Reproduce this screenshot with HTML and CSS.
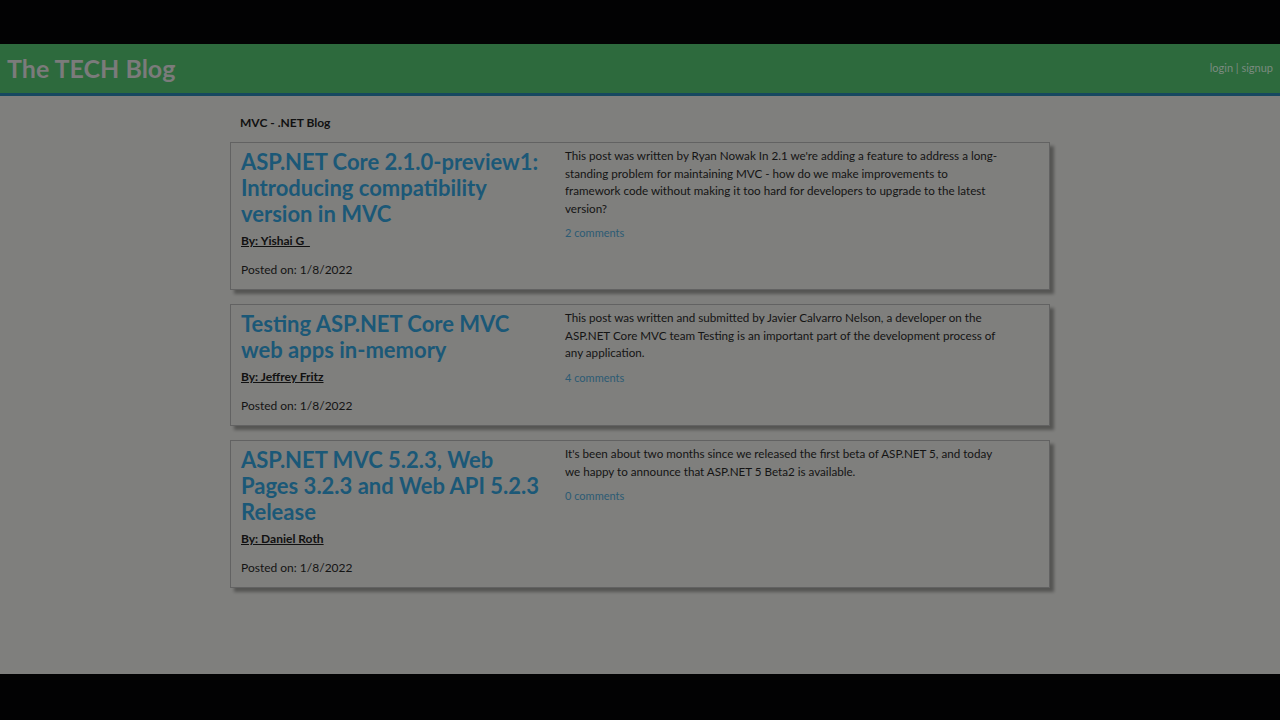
FILE: index.html
```html
<!DOCTYPE html>
<html lang="en">
<head>
<meta charset="utf-8">
<title>The TECH Blog</title>
<link rel="stylesheet" href="styles.css">
</head>
<body>
<div class="page">
  <header class="site-header">
    <a class="brand" href="#">The TECH Blog</a>
    <nav class="auth"><a href="#">login</a> | <a href="#">signup</a></nav>
  </header>
  <main class="main">
    <h2 class="blog-name">MVC - .NET Blog</h2>
    <article class="post">
      <div class="post-meta">
        <h3 class="post-title">ASP.NET Core 2.1.0-preview1: Introducing compatibility version in MVC</h3>
        <a class="post-author" href="#">By: Yishai G_</a>
        <p class="post-date">Posted on: 1/8/2022</p>
      </div>
      <div class="post-body">
        <p class="post-text">This post was written by Ryan Nowak In 2.1 we're adding a feature to address a long-standing problem for maintaining MVC - how do we make improvements to framework code without making it too hard for developers to upgrade to the latest version?</p>
        <a class="post-comments" href="#">2 comments</a>
      </div>
    </article>
    <article class="post">
      <div class="post-meta">
        <h3 class="post-title">Testing ASP.NET Core MVC web apps in-memory</h3>
        <a class="post-author" href="#">By: Jeffrey Fritz</a>
        <p class="post-date">Posted on: 1/8/2022</p>
      </div>
      <div class="post-body">
        <p class="post-text">This post was written and submitted by Javier Calvarro Nelson, a developer on the ASP.NET Core MVC team Testing is an important part of the development process of any application.</p>
        <a class="post-comments" href="#">4 comments</a>
      </div>
    </article>
    <article class="post">
      <div class="post-meta">
        <h3 class="post-title">ASP.NET MVC 5.2.3, Web Pages 3.2.3 and Web API 5.2.3 Release</h3>
        <a class="post-author" href="#">By: Daniel Roth</a>
        <p class="post-date">Posted on: 1/8/2022</p>
      </div>
      <div class="post-body">
        <p class="post-text">It's been about two months since we released the first beta of ASP.NET 5, and today we happy to announce that ASP.NET 5 Beta2 is available.</p>
        <a class="post-comments" href="#">0 comments</a>
      </div>
    </article>
  </main>
</div>
</body>
</html>
```
FILE: styles.css
```css
* { box-sizing: border-box; }
html, body { margin: 0; padding: 0; }
body {
  background: #020203;
  padding: 44px 0 46px;
  font-family: Lato, "Noto Sans", sans-serif;
  color: #141414;
}
.page {
  height: 630px;
  background: #7f7f7d;
  overflow: hidden;
}
.site-header {
  height: 52px;
  background: #2d6a3d;
  border-bottom: 3px solid #174860;
  display: flex;
  align-items: center;
  justify-content: space-between;
  padding: 0 7px 2px 7px;
}
.brand {
  color: #7b7b7b;
  font-weight: 700;
  font-size: 25px;
  text-decoration: none;
}
.auth {
  color: #7b8a80;
  font-size: 11px;
}
.auth a { color: #7b8a80; text-decoration: none; }
.main {
  width: 820px;
  margin: 0 auto;
  padding-top: 18px;
}
.blog-name {
  margin: 0 0 11px 10px;
  font-size: 12px;
  line-height: 17px;
  font-weight: 700;
  color: #111;
}
.post {
  display: grid;
  grid-template-columns: 314px 438px;
  column-gap: 10px;
  align-items: start;
  border: 1px solid #626262;
  box-shadow: 4px 4px 3px rgba(0, 0, 0, 0.33);
  padding: 6px 10px 11px 10px;
  margin-bottom: 14px;
}
.post-title {
  margin: 0 0 5px;
  font-size: 22px;
  line-height: 26px;
  font-weight: 700;
  color: #1b5877;
}
.post-author {
  display: block;
  font-size: 12px;
  line-height: 17px;
  font-weight: 700;
  color: #111;
}
.post-date {
  margin: 12px 0 0;
  font-size: 12px;
  line-height: 17px;
}
.post-body {
  margin-top: -2px;
}
.post-text {
  margin: 0;
  font-size: 11.65px;
  line-height: 17.6px;
}
.post-comments {
  display: inline-block;
  margin-top: 8px;
  font-size: 11px;
  line-height: 16px;
  color: #2c5b74;
  text-decoration: none;
}
```
